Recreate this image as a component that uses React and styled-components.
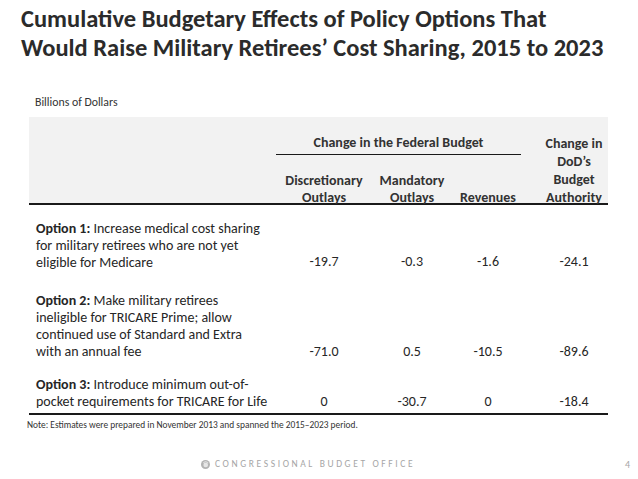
import React from 'react';
import styled, { createGlobalStyle } from 'styled-components';

const GlobalStyle = createGlobalStyle`
  html, body {
    margin: 0;
    padding: 0;
    background: #fff;
  }
  body {
    font-family: Carlito, Lato, "Open Sans", sans-serif;
    color: #262626;
  }
`;

const Slide = styled.div`
  width: 638px;
  height: 479px;
  overflow: hidden;
  display: flex;
  flex-direction: column;
`;

const Title = styled.h1`
  margin: 5px 0 0 21px;
  font-size: 24.5px;
  line-height: 29px;
  font-weight: 700;
  color: #2b2b2b;
  white-space: nowrap;
`;

const Units = styled.div`
  margin: 32px 0 0 35px;
  font-size: 11.8px;
  line-height: 14px;
  color: #333;
`;

const Table = styled.div`
  margin: 8px 0 0 29px;
  width: 579px;
`;

const cols = '247px 96px 80px 72px 84px';

const Head = styled.div`
  display: grid;
  grid-template-columns: ${cols};
  grid-template-rows: auto auto;
  row-gap: 18px;
  height: 88px;
  box-sizing: border-box;
  padding-top: 17px;
  background: #f2f2f2;
  border-bottom: 2px solid #1a1a1a;
  font-size: 14px;
  font-weight: 700;
  color: #333;
  white-space: nowrap;
`;

const Spanner = styled.div`
  grid-column: 2 / 5;
  grid-row: 1;
  text-align: center;
  line-height: 17px;
  padding-bottom: 3px;
  border-bottom: 1px solid #1a1a1a;
  margin-right: 3px;
`;

const ColLabel = styled.div`
  grid-row: 2;
  grid-column: ${p => p.$col};
  align-self: end;
  text-align: center;
  line-height: 16.5px;
  margin-bottom: 1px;
`;

const DodLabel = styled.div`
  grid-column: 5;
  grid-row: 1 / 3;
  align-self: end;
  text-align: center;
  line-height: 18px;
  padding-left: 16px;
  margin-bottom: 0;
`;

const Body = styled.div`
  padding-bottom: 3px;
  border-bottom: 2px solid #1a1a1a;
`;

const Row = styled.div`
  display: grid;
  grid-template-columns: ${cols};
  align-items: end;
  padding-top: ${p => p.$top}px;
  font-size: 14px;
  line-height: 17px;
`;

const Label = styled.div`
  padding-left: 7px;
  white-space: nowrap;
  b {
    font-weight: 700;
  }
`;

const Value = styled.div`
  text-align: center;
  padding-left: ${p => p.$pad || 0}px;
  margin-bottom: ${p => p.$lift || 0}px;
`;

const Note = styled.div`
  margin: 5px 0 0 27px;
  font-size: 9.4px;
  line-height: 11px;
  color: #333;
`;

const Footer = styled.div`
  margin-top: 27px;
  display: flex;
  align-items: center;
  padding-left: 201px;
  padding-right: 8px;
  height: 12px;
`;

const Agency = styled.span`
  margin-left: 5px;
  font-size: 9.5px;
  letter-spacing: 2.6px;
  color: #a6a6a6;
  white-space: nowrap;
`;

const PageNo = styled.span`
  margin-left: auto;
  font-size: 10px;
  color: #a6a6a6;
`;

const Logo = () => (
  <svg width="9" height="9" viewBox="0 0 20 20">
    <circle cx="10" cy="10" r="10" fill="#b3b3b3" />
    <circle cx="10.5" cy="11" r="5.2" fill="#e6e6e6" />
    <path d="M5 6 Q10 1 16 6" stroke="#e6e6e6" strokeWidth="2" fill="none" />
  </svg>
);

const rows = [
  {
    top: 15,
    label: ['Increase medical cost sharing', 'for military retirees who are not yet', 'eligible for Medicare'],
    values: ['-19.7', '-0.3', '-1.6', '-24.1'],
  },
  {
    top: 21,
    label: ['Make military retirees', 'ineligible for TRICARE Prime; allow', 'continued use of Standard and Extra', 'with an annual fee'],
    values: ['-71.0', '0.5', '-10.5', '-89.6'],
  },
  {
    top: 16,
    label: ['Introduce minimum out-of-', 'pocket requirements for TRICARE for Life'],
    values: ['0', '-30.7', '0', '-18.4'],
  },
];

const App = () => (
  <Slide>
    <GlobalStyle />
    <Title>
      Cumulative Budgetary Effects of Policy Options That
      <br />
      Would Raise Military Retirees’ Cost Sharing, 2015 to 2023
    </Title>
    <Units>Billions of Dollars</Units>
    <Table>
      <Head>
        <Spanner>Change in the Federal Budget</Spanner>
        <ColLabel $col={2}>Discretionary<br />Outlays</ColLabel>
        <ColLabel $col={3}>Mandatory<br />Outlays</ColLabel>
        <ColLabel $col={4}>Revenues</ColLabel>
        <DodLabel>Change in<br />DoD’s<br />Budget<br />Authority</DodLabel>
      </Head>
      <Body>
        {rows.map((r, i) => (
          <Row key={i} $top={r.top}>
            <Label>
              <b>Option {i + 1}:</b> {r.label[0]}
              {r.label.slice(1).map((l, j) => (
                <React.Fragment key={j}>
                  <br />
                  {l}
                </React.Fragment>
              ))}
            </Label>
            {r.values.map((v, j) => (
              <Value key={j} $pad={j === 3 ? 16 : 0} $lift={i === 0 ? 1 : 0}>{v}</Value>
            ))}
          </Row>
        ))}
      </Body>
    </Table>
    <Note>Note: Estimates were prepared in November 2013 and spanned the 2015–2023 period.</Note>
    <Footer>
      <Logo />
      <Agency>CONGRESSIONAL BUDGET OFFICE</Agency>
      <PageNo>4</PageNo>
    </Footer>
  </Slide>
);

export default App;
